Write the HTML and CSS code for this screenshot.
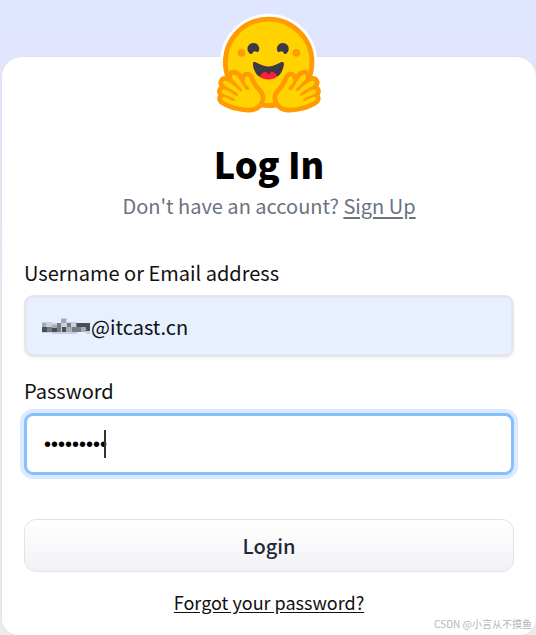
FILE: index.html
```html
<!DOCTYPE html>
<html lang="en">
<head>
<meta charset="utf-8">
<meta name="viewport" content="width=device-width, initial-scale=1">
<title>Log In</title>
<link rel="stylesheet" href="styles.css">
</head>
<body>
<main class="card">
  <svg class="logo" viewBox="0 0 95 88" aria-hidden="true">
    <defs>
      <g id="hand">
        <path fill="#FF9A00" d="M17.52 48c-1.62 0-3.06.66-4.07 1.87a5.97 5.97 0 0 0-1.33 3.76 7.1 7.1 0 0 0-1.94-.3c-1.55 0-2.95.59-3.94 1.66a5.8 5.8 0 0 0-.8 7 5.3 5.3 0 0 0-1.79 2.82c-.24.9-.48 2.8.8 4.74a5.22 5.22 0 0 0-.37 5.02c1.02 2.32 3.57 4.14 8.52 6.1 3.07 1.22 5.89 2 5.91 2.01a44.33 44.33 0 0 0 10.93 1.6c5.86 0 10.05-1.8 12.46-5.34 3.88-5.69 3.33-10.9-1.7-15.92-2.77-2.78-4.62-6.87-5-7.77-.78-2.66-2.84-5.62-6.25-5.62a5.7 5.7 0 0 0-4.6 2.46c-1-1.26-1.98-2.25-2.86-2.82A7.4 7.4 0 0 0 17.52 48Z"/>
        <path fill="#FFD200" d="M38.6 76.69c2.75-4.04 2.55-7.07-1.22-10.84-3.78-3.77-5.98-9.3-5.98-9.3s-.82-3.2-2.69-2.9c-1.87.3-3.24 5.08.68 8.01 3.91 2.93-.78 4.92-2.29 2.17-1.5-2.75-5.62-9.82-7.76-11.18-2.13-1.35-3.63-.6-3.13 2.2.5 2.79 9.43 9.55 8.56 11-.87 1.47-3.93-1.71-3.93-1.71s-9.57-8.71-11.66-6.44c-2.08 2.27 1.59 4.17 6.8 7.33 5.23 3.16 5.64 4 4.9 5.2-.75 1.2-12.28-8.53-13.36-4.4-1.08 4.11 11.77 5.3 10.98 8.15-.8 2.85-9.06-5.38-10.74-2.18-1.7 3.21 11.65 6.98 11.76 7.01 4.3 1.12 15.25 3.49 19.08-2.12Z"/>
      </g>
    </defs>
    <circle cx="47.21" cy="41.75" r="41.2" fill="#fff"/>
    <circle cx="47.21" cy="41.75" r="36.75" fill="#FFD200" stroke="#FF9A00" stroke-width="4"/>
    <path fill="#3A3B45" d="M58.5 32.3c1.28.44 1.78 3.06 3.07 2.38a5 5 0 1 0-6.76-2.07c.61 1.15 2.55-.72 3.7-.32ZM34.95 32.3c-1.28.44-1.79 3.06-3.07 2.38a5 5 0 1 1 6.76-2.07c-.61 1.15-2.56-.72-3.7-.32Z"/>
    <path fill="#FF1F3D" d="M46.96 56.29c9.83 0 13-8.76 13-13.26 0-2.34-1.57-1.6-4.09-.36-2.33 1.15-5.46 2.74-8.9 2.74-7.19 0-13-6.88-13-2.38s3.16 13.26 13 13.26Z"/>
    <path fill="#3A3B45" d="M39.43 54a8.7 8.7 0 0 1 5.3-4.49c.4-.12.81.57 1.24 1.28.4.68.82 1.37 1.24 1.37.45 0 .9-.68 1.33-1.35.45-.7.89-1.38 1.32-1.25a8.61 8.61 0 0 1 5 4.17c3.73-2.94 5.1-7.74 5.1-10.7 0-2.34-1.57-1.6-4.09-.36l-.14.07c-2.31 1.15-5.39 2.67-8.77 2.67s-6.45-1.52-8.77-2.67c-2.6-1.29-4.23-2.1-4.23.29 0 3.05 1.46 8.06 5.47 10.97Z"/>
    <circle cx="70.71" cy="33.75" r="3.25" fill="#FF9A00"/>
    <circle cx="24.21" cy="33.75" r="3.25" fill="#FF9A00"/>
    <use href="#hand"/>
    <use href="#hand" transform="translate(94.92 0) scale(-1 1)"/>
  </svg>
  <h1 class="title">Log In</h1>
  <p class="subtitle">Don't have an account? <a class="link" href="#">Sign Up</a></p>
  <form class="form">
    <label class="label" for="username">Username or Email address</label>
    <div class="field">
      <input class="input input-filled" id="username" type="text" value="@itcast.cn">
      <svg class="mask" viewBox="0 0 50 18" shape-rendering="crispEdges" aria-hidden="true">
        <path fill="#c9cfdb" d="M0 4h10v11H0zM10 5h9v11h-9zM19 0h6v16h-6zM25 4h10v12H25zM35 5h9v9h-9zM44 13h4v3h-4z"/>
        <path fill="#a5aab4" d="M0 5h4v9H0zM19 1h5v4h-5zM24 9h6v5h-6zM10 7h5v3h-5zM39 9h5v5h-5z"/>
        <path fill="#777c84" d="M5 9h5v5H5zM15 5h4v9h-4zM25 5h4v4h-4zM30 9h5v5h-5zM34 5h5v9h-5z"/>
        <path fill="#4b4e54" d="M0 9h5v5H0zM10 10h5v4h-5zM20 9h4v5h-4zM35 5h9v4h-9zM44 5h4v8h-4z"/>
      </svg>
    </div>
    <label class="label" for="password">Password</label>
    <div class="field">
      <input class="input input-active" id="password" type="password" value="password1">
      <span class="caret"></span>
    </div>
    <button class="button" type="button">Login</button>
  </form>
  <a class="link forgot" href="#">Forgot your password?</a>
</main>
<div class="watermark">CSDN @小言从不摸鱼</div>
</body>
</html>
```
FILE: styles.css
```css
* {
  box-sizing: border-box;
}

body {
  margin: 0;
  min-height: 100vh;
  padding: 57px 0 0 2px;
  overflow: hidden;
  background: linear-gradient(#e0e6ff, #e2e6fd 100px, #ebeaf2 400px, #f1ece4);
  font-family: "Noto Sans CJK SC", "Noto Sans", sans-serif;
  font-size: 20px;
  line-height: 28px;
  color: #111;
}

.card {
  display: flex;
  flex-direction: column;
  align-items: center;
  min-height: calc(100vh - 57px);
  padding: 0 22px 16px;
  border-radius: 20px 20px 16px 16px;
  background: #fff;
  box-shadow: 0 0 2px 1px #dfe1ea;
}

.logo {
  width: 112px;
  height: 104px;
  margin-top: -44px;
  overflow: visible;
}

.title {
  margin: 22px 0 0;
  font-size: 36px;
  line-height: 48px;
  font-weight: 900;
  color: #000;
}

.subtitle {
  margin: 5px 0 0;
  color: #6b7280;
}

.link {
  color: inherit;
  text-decoration: underline;
  text-underline-offset: 3px;
}

.form {
  display: flex;
  flex-direction: column;
  width: 100%;
  margin-top: 39px;
}

.label {
  margin-bottom: 8px;
}

.field {
  position: relative;
  margin-bottom: 20px;
}

.input {
  display: block;
  width: 100%;
  height: 62px;
  padding: 0 17px;
  border: 3px solid #e5e7eb;
  border-radius: 9px;
  outline: none;
  background: #fff;
  font: inherit;
  color: #111;
}

.input-filled {
  padding-left: 64px;
  background: #e6f0ff;
  box-shadow: 0 2px 3px #0000000c;
}

.input-active {
  border-color: #85c1fd;
  box-shadow: 0 0 0 4px #dce9fe;
  font-family: "Liberation Sans", sans-serif;
  color: #000;
}

.mask {
  position: absolute;
  left: 18px;
  top: 23px;
  width: 50px;
  height: 18px;
}

.caret {
  position: absolute;
  left: 80px;
  top: 17px;
  width: 2px;
  height: 28px;
  background: #333;
}

.button {
  height: 53px;
  margin-top: 24px;
  border: 1px solid #e0e3e8;
  border-radius: 12px;
  background: linear-gradient(#fff, #f1f2f5);
  font: inherit;
  font-weight: 500;
  color: #1f2937;
}

.forgot {
  margin-top: 16px;
  font-size: 18px;
  text-underline-offset: 2px;
}

.watermark {
  position: absolute;
  right: 4px;
  bottom: 4px;
  font-size: 10px;
  line-height: 14px;
  color: #b5b5b5;
}
```
